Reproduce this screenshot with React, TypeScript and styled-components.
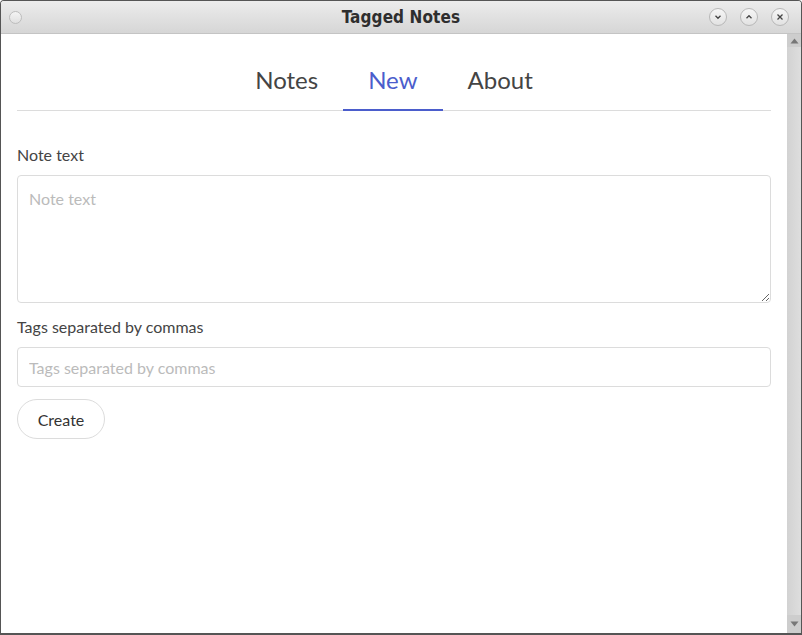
import React from "react";
import styled, { createGlobalStyle } from "styled-components";

const Global = createGlobalStyle`
  html, body { margin: 0; padding: 0; background: #fff; }
  body { font-family: Lato, "Noto Sans", sans-serif; }
  * { box-sizing: border-box; }
`;

const Window = styled.div`
  width: 802px;
  height: 635px;
  display: flex;
  flex-direction: column;
  border: 1px solid #555;
  border-bottom-width: 2px;
  border-radius: 4px 4px 0 0;
  overflow: hidden;
  background: #fff;
`;

const TitleBar = styled.div`
  height: 33px;
  flex: none;
  display: grid;
  grid-template-columns: 1fr auto 1fr;
  align-items: center;
  background: linear-gradient(#ececec, #d6d6d6);
  border-bottom: 1px solid #c4c4c4;
  padding: 0 12px 0 8px;
`;

const Title = styled.div`
  text-align: center;
  font-family: "DejaVu Sans Condensed", "DejaVu Sans", sans-serif;
  font-weight: bold;
  font-size: 17px;
  color: #2e2e2e;
  padding-left: 4px;
  letter-spacing: 0.1px;
`;

const MenuDot = styled.div`
  width: 13px;
  height: 13px;
  border-radius: 50%;
  border: 1px solid #bdbdbd;
  background: linear-gradient(#f4f4f4, #e0e0e0);
`;

const Controls = styled.div`
  display: flex;
  gap: 13px;
  align-items: center;
  justify-content: flex-end;
`;

const CtlBtn = styled.div`
  width: 18px;
  height: 18px;
  border-radius: 50%;
  border: 1px solid #b8b8b8;
  background: linear-gradient(#f6f6f6, #e2e2e2);
  display: flex;
  align-items: center;
  justify-content: center;
`;

const Body = styled.div`
  flex: 1;
  display: flex;
  min-height: 0;
`;

const Main = styled.div`
  flex: 1;
  padding: 17px 16px 0 16px;
  display: flex;
  flex-direction: column;
`;

const Scrollbar = styled.div`
  width: 14px;
  flex: none;
  display: flex;
  flex-direction: column;
  background: linear-gradient(90deg, #d2d2d2, #dedede);
`;

const ScrollArrow = styled.div<{ $h: number }>`
  height: ${(p) => p.$h}px;
  display: flex;
  align-items: center;
  justify-content: center;
  background: #cdcdcd;
`;

const ScrollTrack = styled.div`
  flex: 1;
`;

const Tabs = styled.div`
  display: flex;
  justify-content: center;
  border-bottom: 1px solid #dcdcdc;
`;

const Tab = styled.div<{ $active?: boolean }>`
  padding: 11px 25px 11px;
  font-size: 24px;
  line-height: 36px;
  color: ${(p) => (p.$active ? "#4b5dcc" : "#444")};
  border-bottom: 2px solid ${(p) => (p.$active ? "#4b5dcc" : "transparent")};
  margin-bottom: -1px;
`;

const Form = styled.div`
  display: flex;
  flex-direction: column;
  align-items: flex-start;
  padding-top: 32px;
`;

const Label = styled.label`
  font-size: 16px;
  line-height: 24px;
  color: #444;
  margin-bottom: 8px;
`;

const TextArea = styled.textarea`
  width: 100%;
  height: 128px;
  border: 1px solid #dcdcdc;
  border-radius: 4px;
  padding: 11px 11px;
  font-family: Lato, sans-serif;
  font-size: 16px;
  line-height: 24px;
  color: #444;
  resize: vertical;
  outline: none;
  margin: 0 0 12px;
  display: block;
  &::placeholder { color: #bbb; }
`;

const Input = styled.input`
  width: 100%;
  height: 40px;
  border: 1px solid #dcdcdc;
  border-radius: 4px;
  padding: 0 11px;
  font-family: Lato, sans-serif;
  font-size: 16px;
  color: #444;
  outline: none;
  margin: 0 0 12px;
  &::placeholder { color: #bbb; }
`;

const Button = styled.button`
  height: 40px;
  width: 88px;
  padding: 0;
  border: 1px solid #dcdcdc;
  border-radius: 20px;
  background: #fff;
  font-family: Lato, sans-serif;
  font-size: 16px;
  color: #333;
`;

const Chevron = ({ up }: { up?: boolean }) => (
  <svg width="8" height="8" viewBox="0 0 8 8">
    <path
      d={up ? "M1.5 5.2 L4 2.7 L6.5 5.2" : "M1.5 2.8 L4 5.3 L6.5 2.8"}
      fill="none"
      stroke="#444"
      strokeWidth="1.3"
    />
  </svg>
);

const Cross = () => (
  <svg width="8" height="8" viewBox="0 0 8 8">
    <path d="M1.5 1.5 L6.5 6.5 M6.5 1.5 L1.5 6.5" stroke="#444" strokeWidth="1.3" />
  </svg>
);

const Tri = ({ up }: { up?: boolean }) => (
  <svg width="9" height="6" viewBox="0 0 9 6">
    <path d={up ? "M0.5 5.5 L4.5 0.5 L8.5 5.5 Z" : "M0.5 0.5 L4.5 5.5 L8.5 0.5 Z"} fill="#777" />
  </svg>
);

export default function App() {
  return (
    <>
      <Global />
      <Window>
        <TitleBar>
          <MenuDot />
          <Title>Tagged Notes</Title>
          <Controls>
            <CtlBtn><Chevron /></CtlBtn>
            <CtlBtn><Chevron up /></CtlBtn>
            <CtlBtn><Cross /></CtlBtn>
          </Controls>
        </TitleBar>
        <Body>
          <Main>
            <Tabs>
              <Tab>Notes</Tab>
              <Tab $active>New</Tab>
              <Tab>About</Tab>
            </Tabs>
            <Form>
              <Label>Note text</Label>
              <TextArea placeholder="Note text" />
              <Label>Tags separated by commas</Label>
              <Input placeholder="Tags separated by commas" />
              <Button>Create</Button>
            </Form>
          </Main>
          <Scrollbar>
            <ScrollArrow $h={13}><Tri up /></ScrollArrow>
            <ScrollTrack />
            <ScrollArrow $h={18}><Tri /></ScrollArrow>
          </Scrollbar>
        </Body>
      </Window>
    </>
  );
}
